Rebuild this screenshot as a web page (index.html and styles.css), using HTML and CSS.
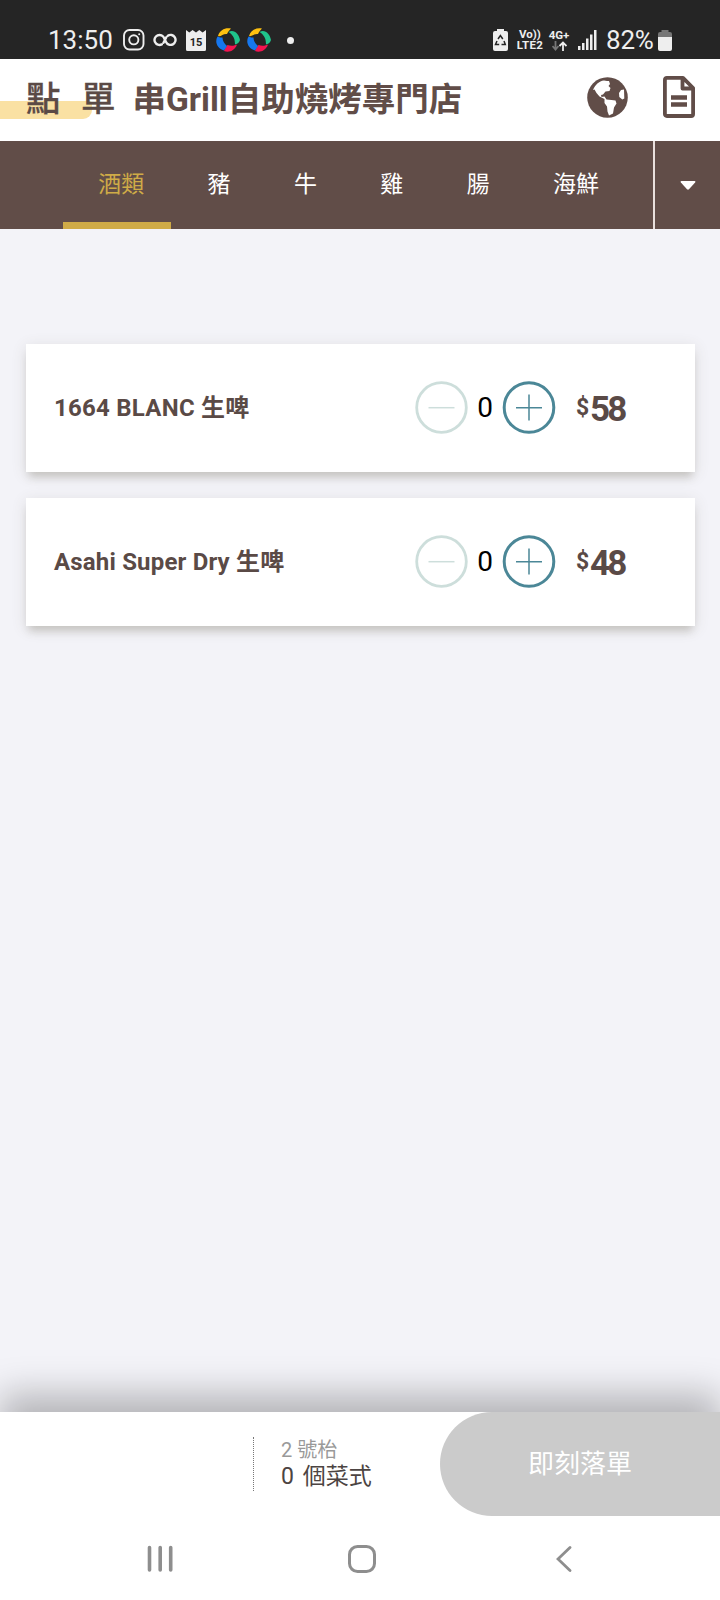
FILE: index.html
```html
<!DOCTYPE html>
<html lang="zh-Hant">
<head>
<meta charset="utf-8">
<title>點單</title>
<link rel="stylesheet" href="styles.css">
</head>
<body>
<div class="status">
  <span class="clock">13:50</span>
  <svg class="ic-insta" width="22" height="22" viewBox="0 0 22 22" fill="none" stroke="#eee" stroke-width="1.900"><rect x="1" y="1" width="19.500" height="19.500" rx="5.500"/><circle cx="10.800" cy="10.800" r="4.600"/><circle cx="16.200" cy="5.300" r="1" fill="#eee" stroke="none"/></svg>
  <svg class="ic-loop" width="24" height="14" viewBox="0 0 24 14" fill="none" stroke="#eee" stroke-width="2.400" stroke-linecap="round"><path d="M8.800 11.400A5 5 0 1 1 11.200 5.200L13 9A5 5 0 1 0 14.800 2.700M10.500 9.800L13.300 4.200"/></svg>
  <svg class="ic-cal" width="20" height="21" viewBox="0 0 20 21"><path fill="#eee" d="M0 0l3.300 2.500L6.600 0 10 2.500 13.300 0l3.300 2.500L20 0v19.500q0 1.500-1.500 1.500h-17Q0 21 0 19.500z"/><text class="cal-day" x="10" y="15.500" text-anchor="middle">15</text></svg>
  <svg class="ic-ball" width="24" height="24" viewBox="0 0 24 24"><use href="#ball"/></svg>
  <svg class="ic-ball second" width="24" height="24" viewBox="0 0 24 24">
    <g id="ball"><path fill="#fdc010" d="M2 8C4 2 9-.5 15 .6 13 3 12 4 11 6 7 5.500 5 9 2 8z"/><path fill="#1fc48b" d="M12.500 4C18 1 23 6 24 12c-1 3-3 4-5 4.500 0-5-1-9-6.500-12.500z"/><path fill="#f3144f" d="M21 16.500c-2 6-8 8.500-13 6.500 1-3 2-4.500 3.500-6 4 1.500 7.500.5 9.500-.5z"/><path fill="#1677ee" d="M1.500 8.500c2 1 3.500 1 5 1 0 3.500 2 6.500 4.500 8.500l-3 4.500C1 20-1.500 14 1.500 8.500z"/></g>
  </svg>
  <span class="dot"></span>
  <div class="status-right">
    <svg width="15" height="22" viewBox="0 0 15 22"><path fill="#eee" d="M4 0h7v2h2q2 0 2 2v16q0 2-2 2H2q-2 0-2-2V4q0-2 2-2h2z"/><path fill="none" stroke="#252525" stroke-width="1.500" d="M5 10l2.400-3.500L9.800 10M11 12l1.300 3.500H8.500M6.200 15.500H2.500L4 12"/></svg>
    <div class="net volte"><span>Vo))</span><span class="lte">LTE2</span></div>
    <div class="net fourg"><span>4G+</span><svg width="15" height="10" viewBox="0 0 15 10" fill="none" stroke-width="1.800"><path stroke="#777" d="M3.500 0v8M.500 5l3 3.500 3-3.500"/><path stroke="#eee" d="M11 10V1.500M7.500 5L11 1.500 14.500 5"/></svg></div>
    <svg class="ic-signal" width="19" height="20" viewBox="0 0 19 20" fill="#eee"><path d="M0 16h2.500v4H0zM4 13h2.500v7H4zM8 8.500h2.500V20H8zM12 4.500h2.500V20H12zM16 0h2.500v20H16z"/></svg>
    <span class="pct">82%</span>
    <svg class="ic-batt" width="14" height="21" viewBox="0 0 14 21"><path fill="#777" d="M3.500 0h7v2H12q2 0 2 2v3H0V4q0-2 2-2h1.500z"/><path fill="#eee" d="M0 7h14v12q0 2-2 2H2q-2 0-2-2z"/></svg>
  </div>
</div>

<header class="header">
  <div class="page-name">點單</div>
  <h1 class="shop">串Grill自助燒烤專門店</h1>
  <svg class="ic-globe" width="41" height="41" viewBox="0 0 41 41"><circle cx="20.500" cy="20.500" r="20.300" fill="#614d48"/><path fill="#fff" d="M6 13C8 8 12 4 17 3.500l3 .5 2 0 1 3-1.500 2 2 2-1 3-4 .5-2.500 3-2 .5.5 2 3-.5 2 3 5 .5 4 .5 1 3-2.500 4-1 6-4 2-1.500-4-.500-5-2.500-3.500 0-4-5-2.500-3-3.500-2-3.500zM37 12.500l.3 9-2 1-3-2.500-.3-4 2-3z"/></svg>
  <svg class="ic-doc" width="32" height="42" viewBox="0 0 32 42" fill="none" stroke="#614d48" stroke-width="3.800" stroke-linejoin="round"><path d="M1.900 3.900q0-2 2-2H20L30.100 12v26q0 2-2 2H3.900q-2 0-2-2zM19.500 2v10.500H30"/><path stroke-width="4.400" d="M8 21.500h16M8 28.500h16"/></svg>
</header>

<nav class="tabs">
  <div class="tab-list">
    <span class="tab active">酒類</span><span class="tab">豬</span><span class="tab">牛</span><span class="tab">雞</span><span class="tab">腸</span><span class="tab">海鮮</span>
  </div>
  <div class="tab-more"><svg width="16" height="9" viewBox="0 0 16 9"><path fill="#fff" d="M1.500 0h13q1.500.2.600 1.500L9 8.300q-1 .9-2 0L.9 1.500Q0 .2 1.500 0z"/></svg></div>
</nav>

<main class="menu">
  <article class="card">
    <span class="dish blanc">1664 BLANC 生啤</span>
    <svg class="minus" width="54" height="54" viewBox="0 0 54 54" fill="none" stroke="#cddedb"><circle cx="26.500" cy="26.500" r="24.800" stroke-width="2.800"/><path stroke-width="1.500" d="M13.500 26.700h26"/></svg>
    <span class="qty">0</span>
    <svg class="plus" width="54" height="54" viewBox="0 0 54 54" fill="none" stroke="#4b8797"><circle cx="27" cy="26.500" r="24.800" stroke-width="3"/><path stroke-width="1.500" d="M14 26.700h26M27 13.500v26"/></svg>
    <span class="price"><span class="cur">$</span><span>58</span></span>
  </article>
  <article class="card">
    <span class="dish">Asahi Super Dry 生啤</span>
    <svg class="minus" width="54" height="54" viewBox="0 0 54 54" fill="none" stroke="#cddedb"><circle cx="26.500" cy="26.500" r="24.800" stroke-width="2.800"/><path stroke-width="1.500" d="M13.500 26.700h26"/></svg>
    <span class="qty">0</span>
    <svg class="plus" width="54" height="54" viewBox="0 0 54 54" fill="none" stroke="#4b8797"><circle cx="27" cy="26.500" r="24.800" stroke-width="3"/><path stroke-width="1.500" d="M14 26.700h26M27 13.500v26"/></svg>
    <span class="price"><span class="cur">$</span><span>48</span></span>
  </article>
</main>

<footer class="order">
  <div class="summary">
    <span class="table-no">2 號枱</span>
    <span class="count">0 個菜式</span>
  </div>
  <div class="submit">即刻落單</div>
</footer>

<div class="sysnav">
  <svg width="26" height="28" viewBox="0 0 26 28" stroke="#8e8e8e" stroke-width="3.600" stroke-linecap="round"><path d="M2.500 2.500v22.500M13.200 2.500v22.500M23.700 2.500v22.500"/></svg>
  <svg class="home" width="28" height="28" viewBox="0 0 28 28" fill="none" stroke="#8e8e8e" stroke-width="3"><rect x="1.500" y="1.500" width="25" height="25" rx="8"/></svg>
  <svg class="back" width="16" height="28" viewBox="0 0 16 28" fill="none" stroke="#8e8e8e" stroke-width="2.800" stroke-linecap="round"><path d="M14 2.500L2 14 14 25.500"/></svg>
</div>
</body>
</html>
```
FILE: styles.css
```css
* { box-sizing: border-box; }
body {
  margin: 0;
  width: 720px;
  height: 1600px;
  display: flex;
  flex-direction: column;
  background: #f3f3f8;
  font-family: Roboto, "Noto Sans CJK TC", sans-serif;
  color: #5a4a46;
  overflow: hidden;
}
svg { display: block; flex: none; }
span { white-space: nowrap; }

.status {
  height: 59px;
  flex: none;
  display: flex;
  align-items: center;
  padding: 21px 48px 0 48px;
  background: #252525;
  color: #eee;
}
.clock { font-size: 26px; width: 75px; line-height: 34px; padding-bottom: 1px; }
.ic-loop { margin-left: 8px; }
.ic-cal { margin-left: 9px; }
.cal-day { font: bold 11px Roboto, sans-serif; fill: #252525; }
.ic-ball { margin-left: 10px; }
.ic-ball.second { margin-left: 7px; }
.dot { width: 7px; height: 7px; border-radius: 50%; background: #eee; margin-left: 16px; }
.status-right { margin-left: auto; display: flex; align-items: center; }
.net { display: flex; flex-direction: column; align-items: center; font-weight: bold; font-size: 11.500px; line-height: 11px; }
.lte { letter-spacing: .4px; }
.volte { width: 28px; margin-left: 8px; }
.fourg { width: 22px; margin-left: 4px; }
.ic-signal { margin-left: 8px; }
.pct { font-size: 26px; line-height: 34px; margin-left: 9px; width: 50px; padding-bottom: 1px; letter-spacing: -.2px; }
.ic-batt { margin-left: 2px; }

.header {
  height: 82px;
  flex: none;
  display: flex;
  align-items: center;
  padding: 0 25px 6px 26px;
  background: #fff;
  position: relative;
}
.header::before {
  content: "";
  position: absolute;
  left: 0;
  top: 42px;
  width: 92px;
  height: 18px;
  border-radius: 0 3px 9px 0;
  background: #fae1a3;
}
.page-name { position: relative; width: 106.500px; font-size: 34.500px; font-weight: 500; letter-spacing: 20.500px; white-space: nowrap; line-height: 48px; padding-top: 4px; -webkit-text-stroke: .3px #614d48; }
.shop { margin: 0; font-size: 33.500px; font-weight: bold; line-height: 48px; padding-top: 6px; white-space: nowrap; color: #614d48; }
.ic-globe { margin-left: auto; }
.ic-doc { margin-left: 35px; }

.tabs {
  height: 88px;
  flex: none;
  display: flex;
  background: #614d48;
  color: #fff;
}
.tab-list { flex: 1; display: flex; padding-left: 66.500px; }
.tab { padding: 1px 31.700px 0; font-size: 23px; line-height: 86px; position: relative; }
.active { color: #cfab47; }
.active::after {
  content: "";
  position: absolute;
  left: -3.500px;
  bottom: 0;
  width: 108px;
  height: 7px;
  background: #cfab47;
}
.tab-more { width: 67px; border-left: 2px solid #e9e0dd; display: flex; align-items: center; justify-content: center; }

.menu { flex: 1; padding: 115px 25px 0 26px; display: flex; flex-direction: column; gap: 26px; }
.card {
  height: 128px;
  flex: none;
  display: flex;
  align-items: center;
  padding-left: 28px;
  background: #fff;
  box-shadow: 0 8px 8px -3px rgba(90, 85, 65, .22), 0 3px 14px rgba(90, 85, 65, .14);
}
.dish { width: 361px; font-size: 24px; font-weight: bold; line-height: 34px; letter-spacing: .18px; }
.blanc { letter-spacing: .25px; }
.qty { width: 33px; padding-right: 1px; text-align: center; font-size: 28px; color: #000; line-height: 34px; padding-bottom: 1px; }
.price { margin-left: 20px; display: flex; align-items: center; font-size: 35px; font-weight: bold; letter-spacing: -2.800px; line-height: 38px; padding-top: 3px; }
.cur { font-size: 23px; width: 14px; padding-bottom: 3px; }

.order {
  height: 104px;
  flex: none;
  display: flex;
  align-items: center;
  padding-left: 253px;
  background: #fff;
  box-shadow: 0 -18px 36px rgba(0, 0, 0, .26);
}
.summary {
  width: 187px;
  height: 54px;
  padding: 1px 0 0 27px;
  border-left: 1px dotted #777;
  display: flex;
  flex-direction: column;
}
.table-no { font-size: 20px; line-height: 25px; color: #999; }
.count { font-size: 23px; line-height: 27px; word-spacing: 3px; color: #4c4442; }
.submit {
  flex: 1;
  height: 104px;
  border-radius: 52px 0 0 52px;
  background: #cbcbcb;
  color: #fff;
  font-size: 26px;
  line-height: 104px;
  padding-left: 88px;
}
.sysnav { height: 84px; flex: none; background: #fff; display: flex; align-items: center; padding: 1px 0 0 147px; }
.home { margin-left: 175px; }
.back { margin-left: 180px; }
```
